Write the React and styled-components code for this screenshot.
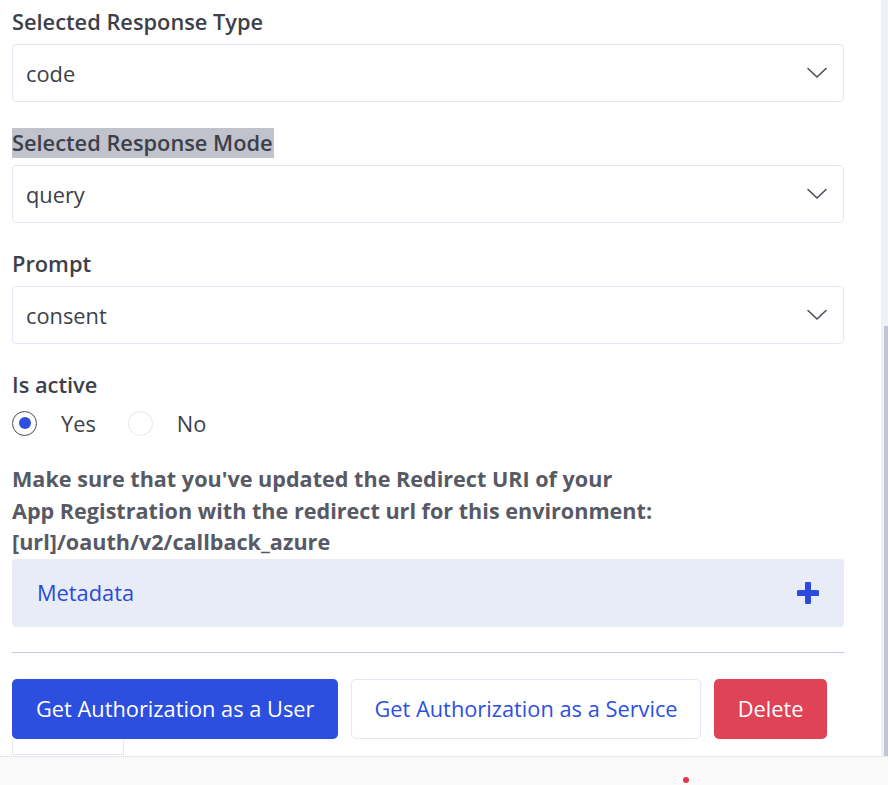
import styled, { createGlobalStyle } from "styled-components"

const GlobalStyle = createGlobalStyle`
    html, body {
        margin: 0;
        padding: 0;
        background: #ffffff;
    }
    body {
        font-family: "Open Sans", "Noto Sans", sans-serif;
        color: #3d3f4a;
    }
`

const Screen = styled.div`
    width: 888px;
    height: 785px;
    display: grid;
    grid-template-columns: 881px 7px;
    grid-template-rows: 756px 29px;
    overflow: hidden;
`

const Content = styled.div`
    padding: 7px 0 0 12px;
    display: flex;
    flex-direction: column;
    width: 832px;
    overflow: hidden;
`

const ScrollTrack = styled.div`
    background: #f0f1f8;
    display: flex;
    flex-direction: column;
    align-items: flex-end;
    padding-top: 326px;
`

const ScrollThumb = styled.div`
    width: 4px;
    flex: 1;
    background: #c3c5d4;
`

const BottomStrip = styled.div`
    grid-column: 1 / 3;
    background: #faf9fa;
    border-top: 1px dotted #d6d8e0;
    display: flex;
    padding-left: 683px;
    padding-top: 20px;
`

const RedDot = styled.span`
    width: 6px;
    height: 6px;
    border-radius: 50%;
    background: #e0364c;
`

const Label = styled.div`
    font-size: 21.8px;
    font-weight: 600;
    line-height: 30px;
    height: 30px;
    color: #3d3f4a;
    margin-bottom: ${p => p.$gap ?? 7}px;
`

const Highlight = styled.span`
    background: #c0c2cc;
    display: inline-block;
    padding-right: 1px;
`

const Select = styled.div`
    height: 58px;
    box-sizing: border-box;
    border: 1px solid #e3e7f5;
    border-radius: 4px;
    display: flex;
    align-items: center;
    justify-content: space-between;
    padding: 0 16px 0 13px;
    font-size: 21.8px;
    color: #3d3f4a;
    margin-bottom: 26px;
`

const RadioRow = styled.div`
    display: flex;
    align-items: center;
    height: 30px;
    margin-bottom: 25px;
    font-size: 21.8px;
    color: #3d3f4a;
`

const RadioOption = styled.label`
    display: flex;
    align-items: center;
    gap: 24px;
    margin-right: 32px;
`

const RadioCircle = styled.span`
    width: 25px;
    height: 25px;
    box-sizing: border-box;
    border-radius: 50%;
    border: 1px solid ${p => (p.$checked ? "#4a4c58" : "#e3e7f5")};
    display: flex;
    align-items: center;
    justify-content: center;

    &::after {
        content: "";
        width: 12px;
        height: 12px;
        border-radius: 50%;
        background: ${p => (p.$checked ? "#2c4fdf" : "transparent")};
    }
`

const Notice = styled.p`
    margin: 0;
    font-size: 21.6px;
    font-weight: 700;
    line-height: 31.5px;
    color: #575a64;
`

const Accordion = styled.div`
    height: 68px;
    background: #e8ecf7;
    border-radius: 4px;
    display: flex;
    align-items: center;
    justify-content: space-between;
    padding: 0 25px 0 25px;
    font-size: 21.8px;
    color: #2b4bd9;
    margin-top: 1px;
`

const Divider = styled.hr`
    border: none;
    border-top: 1.5px solid #c5c8d8;
    margin: 25px 0 26px;
`

const ButtonRow = styled.div`
    display: flex;
    gap: 13px;
`

const Button = styled.button`
    height: 60px;
    box-sizing: border-box;
    padding: 0 ${p => (p.$variant === "outline" ? 22 : 23)}px;
    font-family: "Open Sans", "Noto Sans", sans-serif;
    font-size: 21.8px;
    border-radius: 5px;
    border: 1px solid ${p => (p.$variant === "outline" ? "#e3e7f5" : "transparent")};
    background: ${p =>
        p.$variant === "primary" ? "#2c4fdf" : p.$variant === "danger" ? "#df4356" : "#ffffff"};
    color: ${p => (p.$variant === "outline" ? "#2c4fdf" : "#ffffff")};
`

const GhostButton = styled.div`
    width: 112px;
    height: 15px;
    box-sizing: border-box;
    border: 1px solid #e3e7f5;
    border-top: none;
    margin-top: 1px;
`

const Chevron = () => (
    <svg width="20" height="12" viewBox="0 0 20 12" fill="none">
        <path d="M1 1.5 L10 10 L19 1.5" stroke="#4b4d5a" strokeWidth="1.6" strokeLinecap="round" strokeLinejoin="round" />
    </svg>
)

const Plus = () => (
    <svg width="22" height="22" viewBox="0 0 22 22">
        <path d="M11 2 V20 M2 11 H20" stroke="#2b4bde" strokeWidth="6" strokeLinecap="round" />
    </svg>
)

const fields = [
    { label: "Selected Response Type", value: "code" },
    { label: "Selected Response Mode", value: "query", highlight: true },
    { label: "Prompt", value: "consent" },
]

export default function App() {
    return (
        <>
            <GlobalStyle />
            <Screen>
                <Content>
                    {fields.map(f => (
                        <div key={f.label}>
                            <Label>{f.highlight ? <Highlight>{f.label}</Highlight> : f.label}</Label>
                            <Select>
                                {f.value}
                                <Chevron />
                            </Select>
                        </div>
                    ))}

                    <Label $gap={8}>Is active</Label>
                    <RadioRow>
                        <RadioOption>
                            <RadioCircle $checked />
                            Yes
                        </RadioOption>
                        <RadioOption>
                            <RadioCircle />
                            No
                        </RadioOption>
                    </RadioRow>

                    <Notice>
                        Make sure that you've updated the Redirect URI of your
                        <br />
                        App Registration with the redirect url for this environment:
                        <br />
                        [url]/oauth/v2/callback_azure
                    </Notice>

                    <Accordion>
                        Metadata
                        <Plus />
                    </Accordion>

                    <Divider />

                    <ButtonRow>
                        <Button type="button" $variant="primary">Get Authorization as a User</Button>
                        <Button type="button" $variant="outline">Get Authorization as a Service</Button>
                        <Button type="button" $variant="danger">Delete</Button>
                    </ButtonRow>
                    <GhostButton />
                </Content>
                <ScrollTrack>
                    <ScrollThumb />
                </ScrollTrack>
                <BottomStrip>
                    <RedDot />
                </BottomStrip>
            </Screen>
        </>
    )
}
